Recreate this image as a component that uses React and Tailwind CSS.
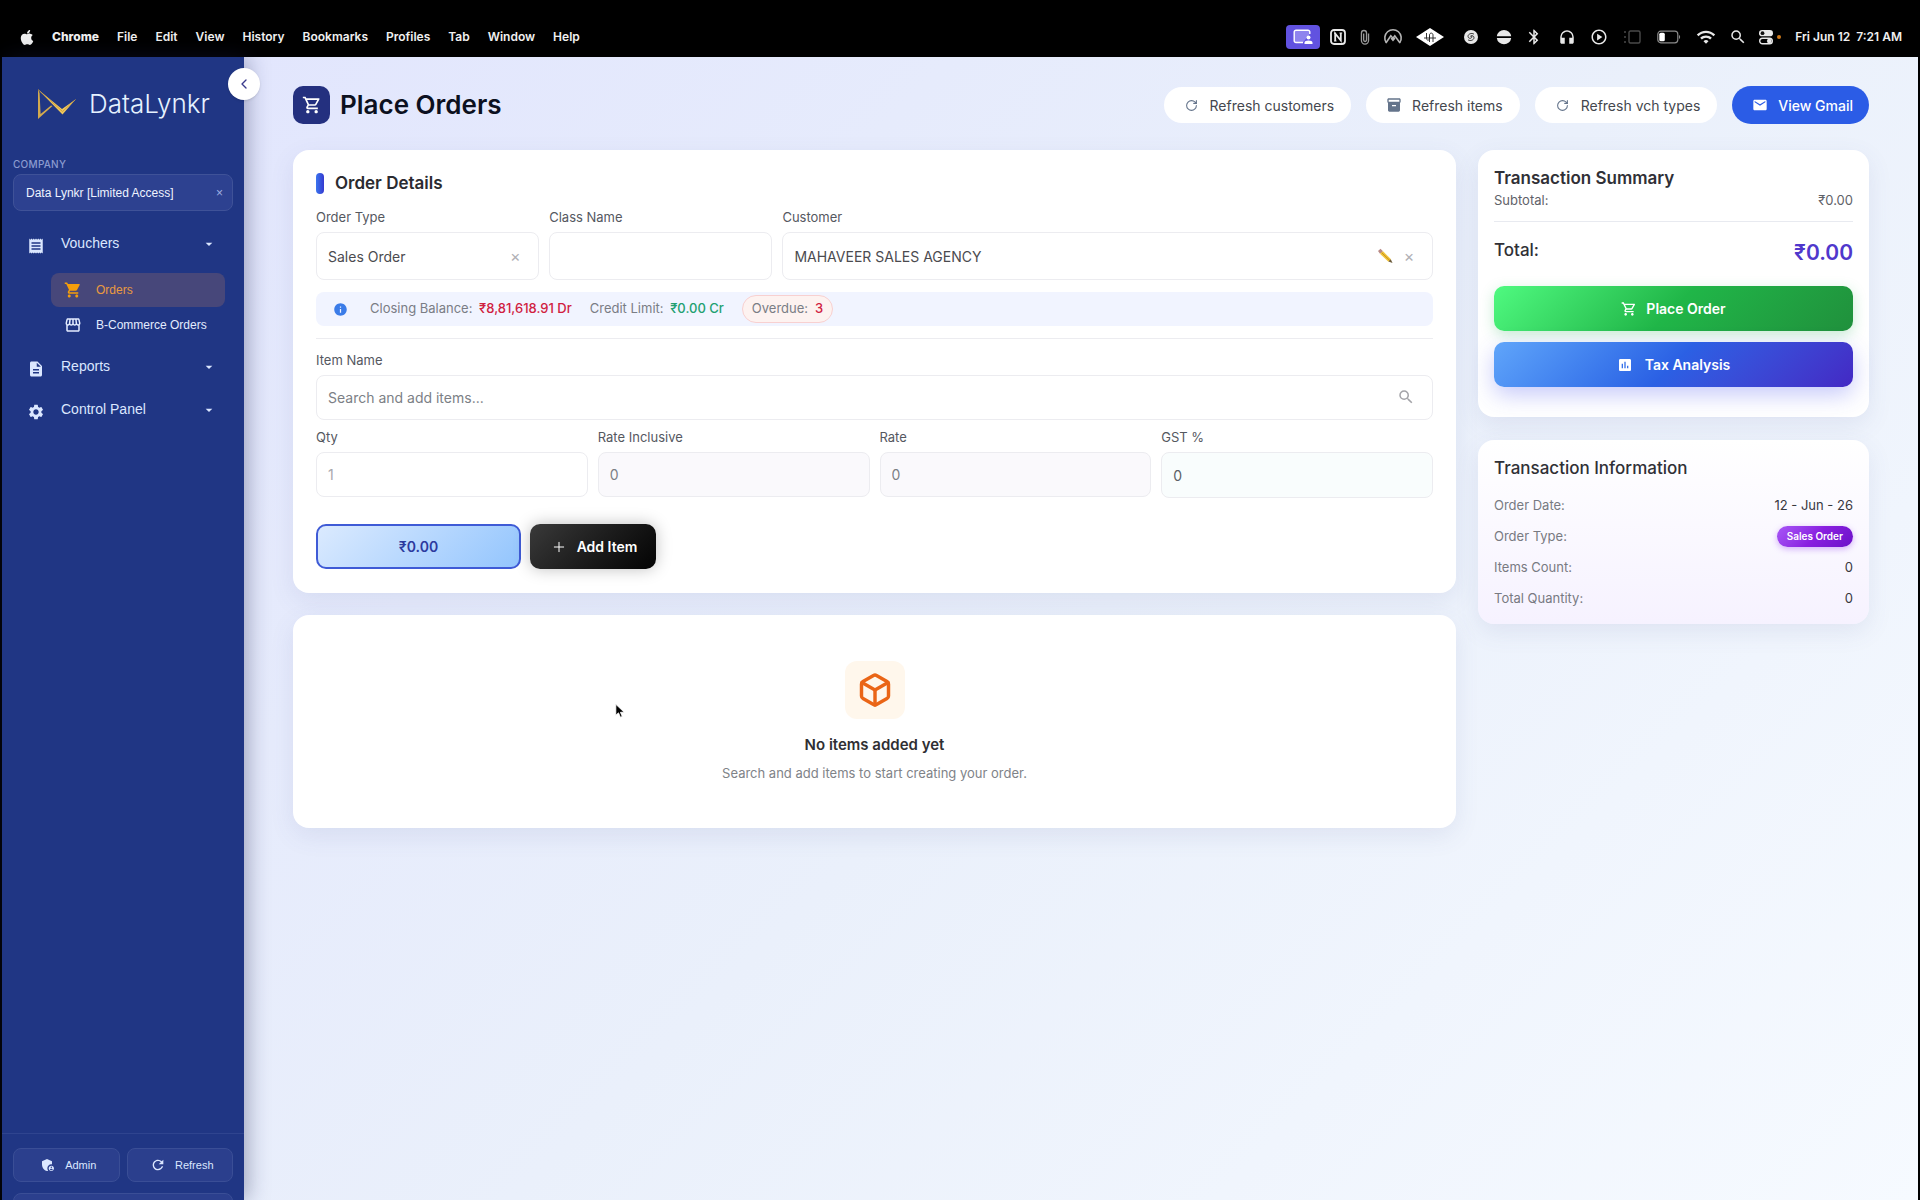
import React from 'react';
import { Box, ChevronLeft, Plus, RotateCw } from 'lucide-react';
import {
  MdAdminPanelSettings,
  MdArrowDropDown,
  MdAssessment,
  MdBluetooth,
  MdDescription,
  MdEmail,
  MdHeadphones,
  MdInfo,
  MdInventory2,
  MdOutlinePlayCircle,
  MdOutlineShoppingCart,
  MdOutlineStorefront,
  MdReceipt,
  MdRefresh,
  MdSearch,
  MdSettings,
  MdShoppingCart,
  MdWifi,
} from 'react-icons/md';
import { FaApple } from 'react-icons/fa';

const menus = ['File', 'Edit', 'View', 'History', 'Bookmarks', 'Profiles', 'Tab', 'Window', 'Help'];

function StatusIcons() {
  return (
    <div className="flex items-center text-[#e8e8e8]">
      <span className="w-[34px] h-6 rounded bg-[#6152e0] flex items-center justify-center">
        <svg viewBox="0 0 20 16" className="w-5 h-4" fill="none" stroke="#fff" strokeWidth="1.4">
          <path d="M10 13.5H3A1.8 1.8 0 0 1 1.200 11.700V3A1.800 1.800 0 0 1 3 1.200h12A1.800 1.800 0 0 1 16.800 3v2" fill="#8f84ee" />
          <circle cx="15.500" cy="8.500" r="2" fill="#fff" stroke="none" />
          <path d="M11.500 15v-1.200c0-1.500 1.600-2.300 4-2.300s4 .8 4 2.300V15z" fill="#fff" stroke="none" />
        </svg>
      </span>
      <svg viewBox="0 0 16 16" className="w-4 h-4 ml-[10px]" fill="none" stroke="currentColor">
        <rect x="1" y="1" width="14" height="14" rx="3" strokeWidth="1.800" />
        <path d="M5.200 12V4.500l5.600 7V4" strokeWidth="1.800" />
        <path d="M4 4.300h2M9.500 4h2.700M4 12h2.500" strokeWidth="1" />
      </svg>
      <svg viewBox="0 0 10 18" className="w-[10px] h-4 ml-[14px]" fill="none" stroke="#9a9a9a" strokeWidth="1.500">
        <path d="M3.500 5v7.500a1.600 1.600 0 0 0 3.200 0V4.500a2.850 2.850 0 0 0-5.700 0V13a4 4 0 0 0 8 0V5" />
      </svg>
      <svg viewBox="0 0 20 18" className="w-5 h-[18px] ml-[13px]" fill="none" stroke="#b5b5b5" strokeWidth="1.600" strokeLinecap="round">
        <path d="M3.200 14.500a8.200 8.200 0 1 1 13.600 0" />
        <path d="m3.400 14.300 4.400-6.500 2.200 2.500 1.800-2.500 4.700 6.500M8.500 10.500l1.500 1.800 1.500-1.800" />
      </svg>
      <svg viewBox="0 0 28 18" className="w-7 h-[18px] ml-[13px]">
        <path d="M14 0 28 9 14 18 0 9Z" fill="#fff" />
        <path d="M10.500 5v5.500c0 2.200 3 2.200 3 0V7c0-2.500 3.500-2.500 3.500 0v7M13.500 8v6M8 10h12" fill="none" stroke="#222" strokeWidth=".9" />
      </svg>
      <svg viewBox="0 0 16 16" className="w-4 h-4 ml-[19px]">
        <circle cx="8" cy="8" r="7" fill="#e8e8e8" />
        <path d="M11 5.200C8.800 3.500 5 5 5 7.300c0 2 2.200 2.500 3.300 1.600 1.200-1 .2-2.400-.8-1.700M5 10.800c2.200 1.700 6 .2 6-2.100 0-2-2.200-2.500-3.300-1.600" fill="none" stroke="#222" strokeWidth=".9" />
      </svg>
      <svg viewBox="0 0 16 16" className="w-4 h-4 ml-[17px]">
        <path d="M.8 7.300a7.250 7.250 0 0 1 14.400 0zM.8 8.900a7.250 7.250 0 0 0 14.400 0z" fill="#e8e8e8" />
      </svg>
      <MdBluetooth className="w-[18px] h-[18px] ml-[13px]" />
      <MdHeadphones className="w-[18px] h-[18px] ml-[15px]" />
      <MdOutlinePlayCircle className="w-[18px] h-[18px] ml-[14px]" />
      <svg viewBox="0 0 18 14" className="w-[18px] h-[14px] ml-[15px]" fill="none" stroke="#4a4a4a" strokeWidth="1.400">
        <rect x="6" y="1" width="11" height="12" rx="1.500" />
        <path d="M1 2h2M1 7h2M1 12h2" />
      </svg>
      <svg viewBox="0 0 24 14" className="w-6 h-[14px] ml-4">
        <rect x=".8" y="1.200" width="20" height="11.600" rx="3" fill="none" stroke="#8a8a8a" strokeWidth="1.200" />
        <rect x="2.300" y="2.700" width="5.500" height="8.600" rx="1.500" fill="#fff" />
        <path d="M22 5v4c1.500-.5 1.500-3.500 0-4" fill="#8a8a8a" />
      </svg>
      <MdWifi className="w-5 h-5 ml-[15px]" />
      <MdSearch className="w-[18px] h-[18px] ml-[13px]" />
      <svg viewBox="0 0 16 16" className="w-4 h-4 ml-[11px]">
        <rect x="1" y="1" width="14" height="6.300" rx="3.150" fill="#e8e8e8" />
        <circle cx="4.500" cy="4.150" r="1.900" fill="#111" />
        <rect x="1.700" y="9.200" width="12.600" height="5.600" rx="2.800" fill="none" stroke="#e8e8e8" strokeWidth="1.400" />
        <circle cx="11.200" cy="12" r="2.300" fill="#e8e8e8" />
      </svg>
      <span className="w-1 h-1 rounded-full bg-[#d07a1a] ml-[3px]" />
    </div>
  );
}

function MenuBar() {
  return (
    <div className="h-[57px] shrink-0 bg-black text-[#f0f0f0] flex items-end justify-between pl-5 pr-[18px] pb-2 text-[12px] font-semibold">
      <div className="flex items-center gap-[18px] h-6">
        <FaApple className="w-[14px] h-[17px]" />
        <span className="font-extrabold">Chrome</span>
        {menus.map((m) => (
          <span key={m}>{m}</span>
        ))}
      </div>
      <div className="flex items-center h-6">
        <StatusIcons />
        <span className="ml-[14px] whitespace-pre">Fri Jun 12  7:21 AM</span>
      </div>
    </div>
  );
}

function Logo() {
  return (
    <div className="flex items-center gap-3 pl-[35px] h-[34px]">
      <svg viewBox="0 0 40 32" className="w-10 h-8">
        <path d="M1 1.500v29.500L15.500 18l-1.500-.5L3.600 26 2.600 5Z" fill="#d3aa4e" />
        <path d="M1 1.500 25 21 38.500 11.500 25.500 26.500Z" fill="#f0c75c" />
        <path d="M1 1.500 25.500 23.500 38.500 11.500" fill="none" stroke="#c99a3c" strokeWidth=".8" />
      </svg>
      <span className="text-[26px] leading-8 font-light text-[#e6f2ff] font-['Inter',sans-serif]">DataLynkr</span>
    </div>
  );
}

function NavGroup({ icon: Icon, label }) {
  return (
    <button className="w-full h-[43px] flex items-center text-left text-[14px] text-[#dbe7ff]">
      <Icon className="w-[18px] h-[18px] mt-1 ml-[14px] mr-4" />
      <span className="flex-1">{label}</span>
      <MdArrowDropDown className="w-4 h-4 mr-4" />
    </button>
  );
}

function Sidebar() {
  return (
    <aside className="relative z-10 w-[242px] shrink-0 bg-[#203684] flex flex-col font-['Liberation_Sans',Arial,sans-serif] shadow-[4px_0_20px_rgba(30,35,80,0.35)]">
      <button
        aria-label="Collapse sidebar"
        className="absolute top-[11px] -right-4 w-8 h-8 rounded-full bg-white text-[#3a3a8c] flex items-center justify-center shadow"
      >
        <ChevronLeft className="w-4 h-4" />
      </button>
      <div className="pt-[30px]">
        <Logo />
      </div>
      <div className="px-[11px] mt-[37px]">
        <div className="font-['Inter',sans-serif] text-[10px] leading-3 font-medium tracking-wide text-[#8b9bd0]">COMPANY</div>
        <button className="mt-1 w-full h-[37px] rounded-lg border border-[#3f5298] bg-[#2d4190] pl-3 pr-[9px] flex items-center justify-between text-[12px] text-[#eef3ff]">
          <span>Data Lynkr [Limited Access]</span>
          <span className="text-[#9fb0e0]">×</span>
        </button>
      </div>
      <nav className="mt-[11px] px-[11px] flex flex-col">
        <NavGroup icon={MdReceipt} label="Vouchers" />
        <div className="mt-2 mb-[3px] pl-[38px] pr-2 flex flex-col gap-px text-[12px]">
          <a href="#orders" className="h-[34px] rounded-lg bg-[#47477a] text-[#ea9a3e] flex items-center pl-[13px] gap-[14px]">
            <MdShoppingCart className="w-[18px] h-[18px] text-[#f59e0b]" />
            Orders
          </a>
          <a href="#b-commerce" className="h-[34px] rounded-lg text-[#e3ecff] flex items-center pl-[13px] gap-[14px] whitespace-nowrap">
            <MdOutlineStorefront className="w-[18px] h-[18px]" />
            B-Commerce Orders
          </a>
        </div>
        <NavGroup icon={MdDescription} label="Reports" />
        <NavGroup icon={MdSettings} label="Control Panel" />
      </nav>
      <div className="mt-auto border-t border-[#2f448f] px-[11px] pt-[14px] h-[67px] overflow-hidden text-[11px] text-[#dbe7ff]">
        <div className="grid grid-cols-2 gap-[7px]">
          <button className="h-[34px] rounded-lg border border-[#3a4e96] bg-[#2b3f8d] flex items-center justify-center gap-[9px] pl-1">
            <MdAdminPanelSettings className="w-4 h-4" />
            Admin
          </button>
          <button className="h-[34px] rounded-lg border border-[#3a4e96] bg-[#2b3f8d] flex items-center justify-center gap-[9px] pl-1">
            <MdRefresh className="w-4 h-4" />
            Refresh
          </button>
        </div>
        <div className="mt-[11px] h-10 rounded-lg border border-[#3a4e96] bg-[#2b3f8d]" />
      </div>
    </aside>
  );
}

function PillButton({ icon: Icon, iconClass = 'w-[13px] h-[13px]', children }) {
  return (
    <button className="h-9 pl-5 pr-[17px] rounded-full bg-white text-[#44474e] text-[14px] flex items-center gap-[10px]">
      <span className="w-4 flex justify-center text-[#64748b]">
        <Icon className={iconClass} />
      </span>
      {children}
    </button>
  );
}

function Field({ id, label, className = '', inputClass = '', children, ...rest }) {
  return (
    <div className={'min-w-0 ' + className}>
      <label htmlFor={id} className="block text-[13px] leading-4 text-[#55585f]">
        {label}
      </label>
      <div className="relative mt-[7px]">
        <input
          id={id}
          className={
            'block w-full rounded-lg border border-[#ececf0] px-[11px] text-[14px] text-[#4b4b4f] outline-none ' + inputClass
          }
          {...rest}
        />
        {children}
      </div>
    </div>
  );
}

function Pencil() {
  return (
    <svg viewBox="0 0 16 16" className="w-4 h-4">
      <path d="m1 3 2.500-2.200L6 3.300 3 5.800Z" fill="#b98a86" />
      <path d="m3 5.800 3-2.500 8 8-2.500 2.500Z" fill="#efc23a" />
      <path d="m4.500 4.500 8.500 8.200" stroke="#c58f1c" strokeWidth="1" />
      <path d="m11.500 13.500 2.300-2.300L15.500 15Z" fill="#6b5a3a" />
    </svg>
  );
}

function OrderDetails() {
  return (
    <section className="rounded-2xl bg-white px-[23px] pt-[21px] pb-6 shadow-[0_8px_24px_rgba(80,90,150,0.1)]">
      <h2 className="flex items-center gap-[11px] text-[17px] leading-6 font-semibold text-[#2b2b30]">
        <span className="w-2 h-[21px] rounded-full bg-linear-to-r from-[#3b74ee] to-[#3538cf]" />
        Order Details
      </h2>
      <div className="mt-[14px] grid grid-cols-[223fr_223fr_650fr] gap-[10px]">
        <Field id="orderType" label="Order Type" defaultValue="Sales Order" inputClass="h-12">
          <button aria-label="Clear order type" className="absolute right-4 inset-y-0 w-4 text-[16px] text-[#b0b0b5]">×</button>
        </Field>
        <Field id="className" label="Class Name" inputClass="h-12" />
        <Field id="customer" label="Customer" defaultValue="MAHAVEER SALES AGENCY" inputClass="h-12">
          <div className="absolute right-4 inset-y-0 flex items-center gap-2">
            <button aria-label="Edit customer"><Pencil /></button>
            <button aria-label="Clear customer" className="w-4 text-[16px] text-[#b0b0b5]">×</button>
          </div>
        </Field>
      </div>

      <div className="mt-3 h-[34px] rounded-lg bg-[#f1f4ff] flex items-center pl-[17px] text-[13px] text-[#7a7d85]">
        <MdInfo className="w-[15px] h-[15px] text-[#3b7ce8] mr-[22px]" />
        <span className="mr-[18px]">
          Closing Balance: <b className="ml-[3px] font-medium text-[#d02040]">₹8,81,618.91 Dr</b>
        </span>
        <span className="mr-[18px]">
          Credit Limit: <b className="ml-[3px] font-medium text-[#22a070]">₹0.00 Cr</b>
        </span>
        <span className="h-7 px-[9px] rounded-full border border-[#f8d0d0] bg-[#fdf2f0] flex items-center gap-[7px]">
          Overdue: <b className="font-medium text-[#d02040]">3</b>
        </span>
      </div>

      <div className="mt-3 pt-[13px] border-t border-[#ececf0]">
        <Field id="itemName" label="Item Name" placeholder="Search and add items..." inputClass="h-[45px] placeholder:text-[#7c7f86]">
          <MdSearch className="absolute right-[18px] top-[13px] w-[18px] h-[18px] text-[#a3a3a8]" />
        </Field>
      </div>

      <div className="mt-[9px] grid grid-cols-4 gap-[10px]">
        <Field id="qty" label="Qty" placeholder="1" inputClass="h-[45px] placeholder:text-[#a8a8ad]" />
        <Field id="rateInc" label="Rate Inclusive" defaultValue="0" inputClass="h-[45px] bg-[#faf9fc] text-[#7c7f86]" />
        <Field id="rate" label="Rate" defaultValue="0" inputClass="h-[45px] bg-[#faf9fc] text-[#7c7f86]" />
        <Field id="gst" label="GST %" defaultValue="0" inputClass="h-[46px] bg-[#f9fdfd] text-[#5c5f66]" />
      </div>

      <div className="mt-[26px] flex gap-[9px]">
        <button className="w-[205px] h-[45px] rounded-[10px] border-2 border-[#3f5bd6] bg-linear-135 from-[#dbeafe] to-[#93c5fd] text-[14px] font-semibold text-[#2c3a9e]">
          ₹0.00
        </button>
        <button className="w-[126px] h-[45px] rounded-[10px] bg-linear-135 from-[#3a3a3a] to-[#050505] text-[14px] font-semibold text-white flex items-center justify-center gap-[10px] pl-[2px] shadow-[0_0_16px_rgba(0,0,0,0.25)]">
          <Plus className="w-4 h-4" strokeWidth={1.5} />
          Add Item
        </button>
      </div>
    </section>
  );
}

function EmptyItems() {
  return (
    <section className="rounded-2xl bg-white flex flex-col items-center pt-[46px] pb-[43px] shadow-[0_8px_24px_rgba(80,90,150,0.1)]">
      <div className="w-[60px] h-[58px] rounded-xl bg-[#fff7ec] flex items-center justify-center">
        <Box className="w-9 h-9 text-[#ea6516]" strokeWidth={2.3} />
      </div>
      <h3 className="mt-[14px] text-[15px] leading-6 font-semibold text-[#2f2f33]">No items added yet</h3>
      <p className="mt-1 text-[13px] leading-6 text-[#808388]">Search and add items to start creating your order.</p>
    </section>
  );
}

function Summary() {
  return (
    <section className="rounded-2xl bg-white px-4 pt-4 pb-[30px] shadow-[0_8px_24px_rgba(80,90,150,0.1)]">
      <h2 className="text-[17px] leading-6 font-semibold text-[#303036]">Transaction Summary</h2>
      <div className="flex justify-between text-[13px] leading-5 pb-[11px] border-b border-[#e8eaf0] text-[#5f6269]">
        <span>Subtotal:</span>
        <span>₹0.00</span>
      </div>
      <div className="mt-4 flex justify-between">
        <span className="text-[17px] leading-6 font-medium text-[#303036]">Total:</span>
        <span className="text-[21px] leading-[30px] font-semibold text-[#5038cc]">₹0.00</span>
      </div>
      <button className="mt-[18px] w-full h-[45px] rounded-[10px] bg-linear-135 from-[#4ffa80] via-[#20b648] to-[#20903c] text-white text-[14px] font-semibold flex items-center justify-center gap-[9px] shadow-[0_4px_14px_rgba(34,180,80,0.25)]">
        <MdOutlineShoppingCart className="w-4 h-4" />
        Place Order
      </button>
      <button className="mt-[11px] w-full h-[45px] rounded-[10px] bg-linear-135 from-[#60a5fa] via-[#2b60e4] to-[#4328c4] text-white text-[14px] font-semibold flex items-center justify-center gap-3 shadow-[0_8px_22px_rgba(70,80,240,0.3)]">
        <MdAssessment className="w-4 h-4" />
        Tax Analysis
      </button>
    </section>
  );
}

function Information() {
  return (
    <section className="rounded-2xl bg-linear-to-b from-white to-[#f6f2ff] px-4 pt-4 pb-[10px] shadow-[0_8px_24px_rgba(80,90,150,0.1)]">
      <h2 className="text-[17px] leading-6 font-medium text-[#303036]">Transaction Information</h2>
      <dl className="mt-[10px] grid grid-cols-[1fr_auto] auto-rows-[31px] items-center text-[13px]">
        <dt className="text-[#787a82]">Order Date:</dt>
        <dd className="text-right text-[#38383e]">12 - Jun - 26</dd>
        <dt className="text-[#787a82]">Order Type:</dt>
        <dd className="justify-self-end h-[21px] px-[10px] rounded-full bg-linear-135 from-[#a855f7] via-[#8a1fe0] to-[#6b10c8] text-white text-[10px] leading-[21px] font-semibold shadow-[0_2px_6px_rgba(150,60,240,0.4)]">
          Sales Order
        </dd>
        <dt className="text-[#787a82]">Items Count:</dt>
        <dd className="text-right text-[#38383e]">0</dd>
        <dt className="text-[#787a82]">Total Quantity:</dt>
        <dd className="text-right text-[#38383e]">0</dd>
      </dl>
    </section>
  );
}

export default function App() {
  return (
    <div className="relative min-h-screen bg-black flex flex-col font-['Inter',sans-serif]">
      <MenuBar />
      <div className="flex-1 flex px-[2px]">
        <Sidebar />
        <main className="flex-1 min-w-0 bg-linear-135 from-[#e2e6fd] via-[#eaf0fb] to-[#f6faff] px-[49px] pt-[29px]">
          <header className="h-[38px] flex items-center justify-between">
            <h1 className="flex items-center gap-[10px] text-[26px] leading-8 font-semibold text-[#0c1020]">
              <span className="w-[37px] h-[38px] rounded-[10px] bg-[#24307f] text-white flex items-center justify-center">
                <MdOutlineShoppingCart className="w-5 h-5" />
              </span>
              Place Orders
            </h1>
            <div className="flex items-center gap-[15px]">
              <PillButton icon={RotateCw}>Refresh customers</PillButton>
              <PillButton icon={MdInventory2} iconClass="w-4 h-4">Refresh items</PillButton>
              <PillButton icon={RotateCw}>Refresh vch types</PillButton>
              <button className="h-[38px] px-4 rounded-full bg-[#2b5ce6] text-white text-[14px] font-medium flex items-center gap-[10px]">
                <MdEmail className="w-4 h-4 ml-1" />
                View Gmail
              </button>
            </div>
          </header>
          <div className="mt-[26px] flex items-start gap-[22px]">
            <div className="flex-1 min-w-0 flex flex-col gap-[22px]">
              <OrderDetails />
              <EmptyItems />
            </div>
            <div className="w-[391px] shrink-0 flex flex-col gap-[23px]">
              <Summary />
              <Information />
            </div>
          </div>
        </main>
      </div>
      {/* pointer */}
      <svg viewBox="0 0 12 18" className="absolute left-[615px] top-[703px] w-[10px] h-4 pointer-events-none">
        <path d="M1 1v13l3.200-2.800L6.500 16.500l2.200-1L6.500 10.500H11Z" fill="#000" stroke="#fff" strokeWidth="1" />
      </svg>
    </div>
  );
}
